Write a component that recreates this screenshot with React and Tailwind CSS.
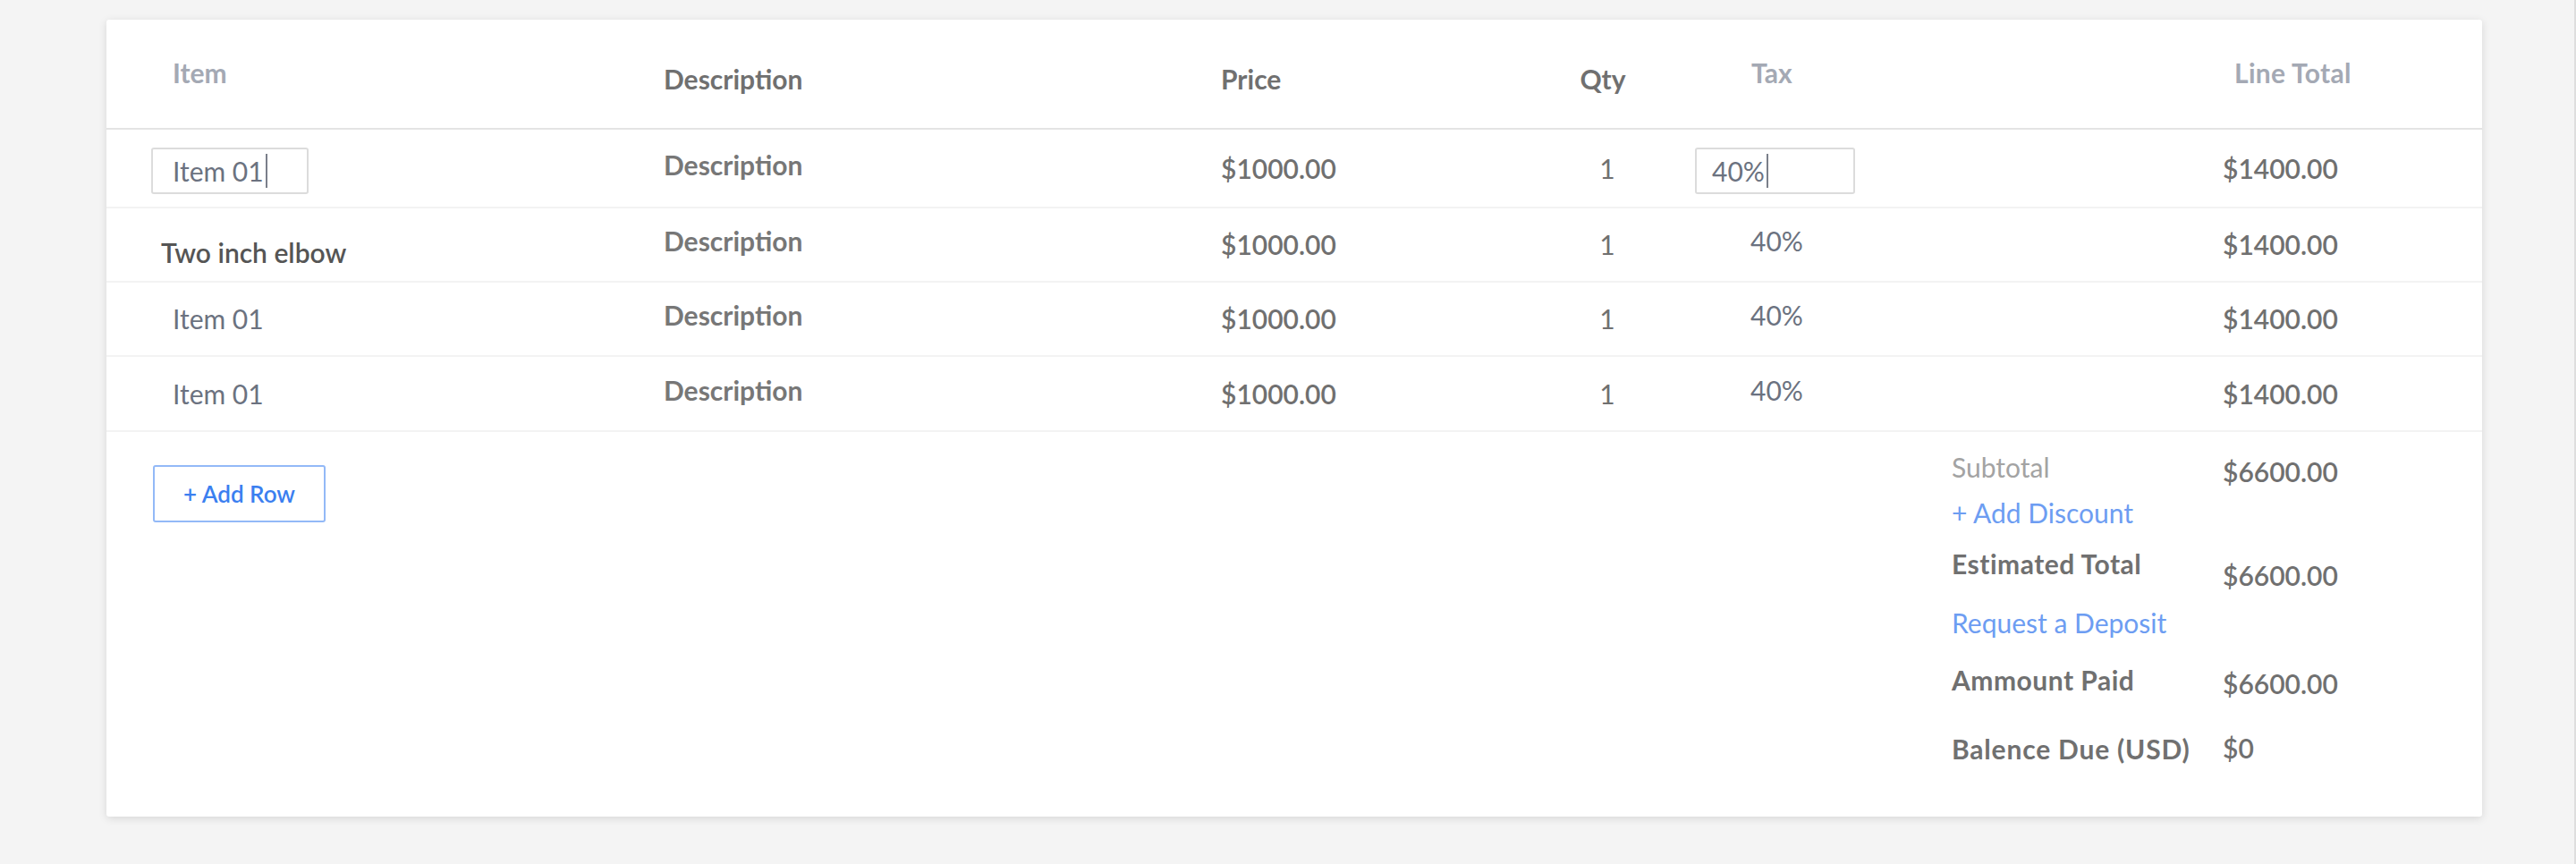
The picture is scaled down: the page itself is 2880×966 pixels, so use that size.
import clsx from 'clsx'

const font = { fontFamily: 'Lato, "Open Sans", sans-serif' }

const rows = [
  { item: 'Item 01', editing: true, h: 'h-[88px]' },
  { item: 'Two inch elbow', named: true, h: 'h-[83px]' },
  { item: 'Item 01', h: 'h-[83px]' },
  { item: 'Item 01', h: 'h-[84px]' },
]

function Caret() {
  return <span className="ml-[2px] inline-block h-[38px] w-[2px] bg-[#7a7f8a]" />
}

function EditBox({ children, className }) {
  return (
    <div
      className={clsx(
        'mt-[6px] flex h-[52px] items-center rounded-[3px] border-2 border-[#dcdcdc] text-[30px] text-[#6b7280]',
        className
      )}
    >
      {children}
      <Caret />
    </div>
  )
}

function LineRow({ row }) {
  return (
    <div className={clsx('flex items-center border-b-2 border-[#f3f3f3] pl-[50px]', row.h)}>
      <div className="w-[573px]">
        {row.editing ? (
          <EditBox className="w-[176px] pl-[22px]">Item 01</EditBox>
        ) : row.named ? (
          <span className="mt-[18px] block pl-[11px] text-[30px] font-semibold text-[#555]">{row.item}</span>
        ) : (
          <span className="block pl-[24px] text-[30px] text-[#6b7280]">{row.item}</span>
        )}
      </div>
      <div className="mb-[8px] w-[623px] text-[30px] font-bold text-[#777]">Description</div>
      <div className="w-[354px] text-[30px] font-semibold text-[#707070]">$1000.00</div>
      <div className="w-[146px] pl-[10px] text-center text-[30px] text-[#707070]">1</div>
      <div className="w-[620px] pl-[30px]">
        {row.editing ? (
          <EditBox className="w-[179px] pl-[17px]">40%</EditBox>
        ) : (
          <span className="mb-[8px] block pl-[62px] text-[30px] text-[#6b7280]">40%</span>
        )}
      </div>
      <div className="text-[30px] font-semibold text-[#707070]">$1400.00</div>
    </div>
  )
}

function TotalLine({ label, value, labelClass, valueClass, h }) {
  return (
    <div className={clsx('flex', h)}>
      <div className={clsx('w-[303px] text-[30px] leading-[36px]', labelClass)}>{label}</div>
      {value && (
        <div className={clsx('text-[30px] font-semibold leading-[36px] text-[#707070]', valueClass)}>{value}</div>
      )}
    </div>
  )
}

export default function App() {
  return (
    <div className="min-h-[966px] border-r-2 border-[#dedede] bg-[#f4f4f4] pt-[22px] pb-[53px] pl-[119px] pr-[103px]" style={font}>
      <div className="h-[891px] rounded-[3px] bg-white shadow-[0_2px_10px_rgba(0,0,0,0.12)]">
        {/* header */}
        <div className="flex h-[123px] items-center border-b-2 border-[#e4e4e4] pt-[12px] pl-[50px] text-[30px] font-bold">
          <div className="mb-[14px] w-[573px] pl-[24px] text-[#a4a9b4]">Item</div>
          <div className="w-[623px] text-[#707070]">Description</div>
          <div className="w-[354px] text-[#707070]">Price</div>
          <div className="w-[146px] text-center text-[#707070]">Qty</div>
          <div className="mb-[14px] w-[620px] pl-[93px] text-[#a4a9b4]">Tax</div>
          <div className="mb-[14px] pl-[13px] tracking-[0.3px] text-[#a4a9b4]">Line Total</div>
        </div>

        {rows.map((row, i) => (
          <LineRow key={i} row={row} />
        ))}

        {/* footer */}
        <div className="flex">
          <div className="w-[2063px] pt-[37px] pl-[52px]">
            <button className="h-[64px] w-[193px] rounded-[3px] border-2 border-[#93b9f7] text-[26px] font-semibold text-[#3b7ff0]">
              + Add Row
            </button>
          </div>
          <div className="pt-[21px]">
            <TotalLine h="h-[51px]" label="Subtotal" labelClass="text-[#a3a3a3]" value="$6600.00" valueClass="pt-[5px]" />
            <TotalLine h="h-[57px]" label="+ Add Discount" labelClass="text-[#6d9df2]" />
            <TotalLine h="h-[66px]" label="Estimated Total" labelClass="font-bold tracking-[0.5px] text-[#707070]" value="$6600.00" valueClass="pt-[13px]" />
            <TotalLine h="h-[64px]" label="Request a Deposit" labelClass="text-[#6d9df2]" />
            <TotalLine h="h-[77px]" label="Ammount Paid" labelClass="font-bold tracking-[0.5px] text-[#707070]" value="$6600.00" valueClass="pt-[4px]" />
            <TotalLine h="h-[36px]" label="Balence Due (USD)" labelClass="font-bold tracking-[0.8px] text-[#707070]" value="$0" valueClass="-mt-[1px]" />
          </div>
        </div>
      </div>
    </div>
  )
}
